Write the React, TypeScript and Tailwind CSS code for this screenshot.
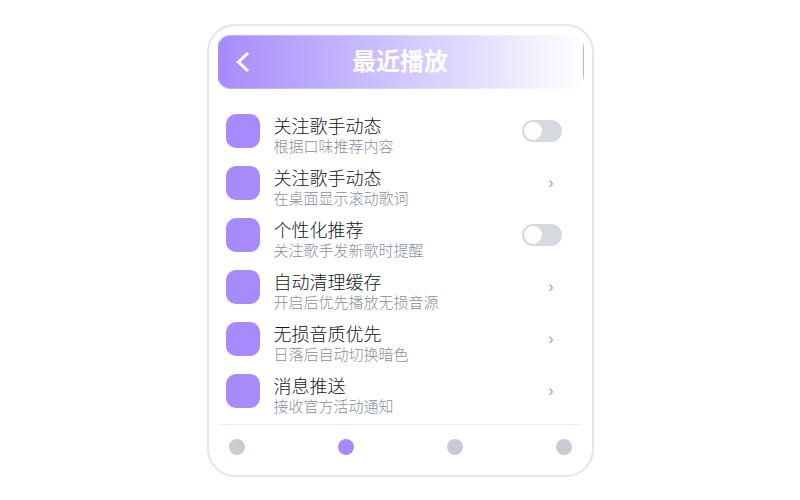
import React from "react";

type Item = {
    id: string;
    title: string;
    desc: string;
    control: "switch" | "link";
};

const items: Item[] = [
    { id: "follow", title: "关注歌手动态", desc: "根据口味推荐内容", control: "switch" },
    { id: "lyrics", title: "关注歌手动态", desc: "在桌面显示滚动歌词", control: "link" },
    { id: "personal", title: "个性化推荐", desc: "关注歌手发新歌时提醒", control: "switch" },
    { id: "cache", title: "自动清理缓存", desc: "开启后优先播放无损音源", control: "link" },
    { id: "lossless", title: "无损音质优先", desc: "日落后自动切换暗色", control: "link" },
    { id: "push", title: "消息推送", desc: "接收官方活动通知", control: "link" },
];

const tabs = ["首页", "播放", "发现", "我的"];
const activeTab = 1;

const Header: React.FC = () => (
    // the gradient repeats under the translucent border
    <header className="relative flex h-[54px] items-center justify-center rounded-[14px] border border-white/25 bg-gradient-to-r from-[#a78bfa] to-white">
        <button type="button" aria-label="返回" className="absolute left-4 text-white">
            <svg width="16" height="22" viewBox="0 0 16 22" fill="none" stroke="currentColor" strokeWidth="3">
                <path d="M14 2 4.5 11l9.5 9" />
            </svg>
        </button>
        <h1 className="text-[24px] leading-[32px] font-bold text-white">最近播放</h1>
    </header>
);

const Row: React.FC<{ item: Item }> = ({ item }) => (
    <li className="flex h-[52px] items-center gap-[14px]">
        <span className="size-[34px] shrink-0 rounded-[10px] bg-[#a78bfa]" />
        <label htmlFor={item.id} className="min-w-0 flex-1 pt-3 font-light">
            <span className="block text-[18px] leading-[20px] text-gray-900">{item.title}</span>
            <span className="block text-[15px] leading-[20px] text-[#8790a0]">{item.desc}</span>
        </label>
        {item.control === "switch" ? (
            <input
                id={item.id}
                type="checkbox"
                role="switch"
                className="h-[22px] w-10 shrink-0 appearance-none rounded-full bg-[#d6d9e0] p-[2px] before:block before:size-[18px] before:rounded-full before:bg-white checked:bg-[#a78bfa] checked:before:ml-[18px]"
            />
        ) : (
            <button id={item.id} type="button" className="mr-2 shrink-0 text-[16px] leading-[20px] text-gray-400">
                ›
            </button>
        )}
    </li>
);

const App: React.FC = () => {
    return (
        <div className="flex min-h-screen items-center justify-center bg-white font-['Liberation_Sans','Noto_Sans_CJK_SC',sans-serif]">
            <main className="w-full max-w-[387px] rounded-[28px] border-2 border-[#e5e5ea] bg-white px-2 pt-[9px]">
                <Header />
                <ul className="mt-4 pr-[22px] pl-[9px]">
                    {items.map((item) => (
                        <Row key={item.id} item={item} />
                    ))}
                </ul>
                <nav className="mx-[2px] mt-[7px] flex justify-between border-t border-[#eeeef1] px-[10px] pt-[14px] pb-5">
                    {tabs.map((tab, i) => (
                        <button
                            key={tab}
                            type="button"
                            aria-label={tab}
                            className={i === activeTab ? "size-4 rounded-full bg-[#a78bfa]" : "size-4 rounded-full bg-[#c7cbd3]"}
                        />
                    ))}
                </nav>
            </main>
        </div>
    );
};

export default App;
